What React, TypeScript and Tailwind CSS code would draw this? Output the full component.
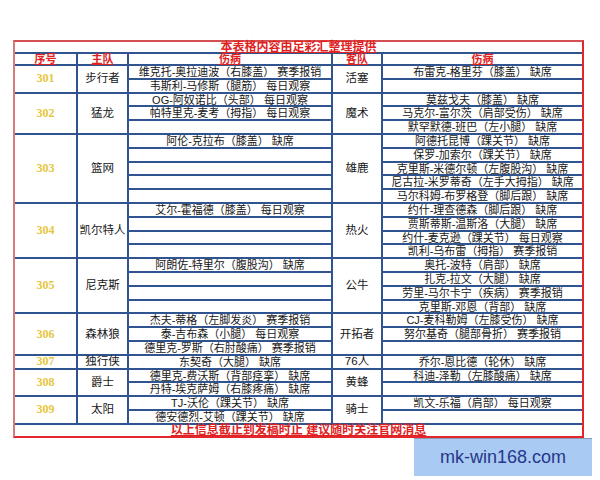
const rows = [
  {
    no: "301",
    home: "步行者",
    homeInj: ["维克托-奥拉迪波（右膝盖） 赛季报销", "韦斯利-马修斯（腿筋） 每日观察"],
    away: "活塞",
    awayInj: ["布雷克-格里芬（膝盖） 缺席", ""],
  },
  {
    no: "302",
    home: "猛龙",
    homeInj: ["OG-阿奴诺比（头部） 每日观察", "帕特里克-麦考（拇指） 每日观察", ""],
    away: "魔术",
    awayInj: ["莫兹戈夫（膝盖） 缺席", "马克尔-富尔茨（肩部受伤） 缺席", "默罕默德-班巴（左小腿） 缺席"],
  },
  {
    no: "303",
    home: "篮网",
    homeInj: ["阿伦-克拉布（膝盖） 缺席", "", "", "", ""],
    away: "雄鹿",
    awayInj: [
      "阿德托昆博（踝关节） 缺席",
      "保罗-加索尔（踝关节） 缺席",
      "克里斯-米德尔顿（左腹股沟） 缺席",
      "尼古拉-米罗蒂奇（左手大拇指） 缺席",
      "马尔科姆-布罗格登（脚后跟） 缺席",
    ],
  },
  {
    no: "304",
    home: "凯尔特人",
    homeInj: ["艾尔-霍福德（膝盖） 每日观察", "", "", ""],
    away: "热火",
    awayInj: [
      "约什-理查德森（脚后跟） 缺席",
      "贾斯蒂斯-温斯洛（大腿） 缺席",
      "约什-麦克逊（踝关节） 每日观察",
      "凯利-乌布雷（拇指） 赛季报销",
    ],
  },
  {
    no: "305",
    home: "尼克斯",
    homeInj: ["阿朗佐-特里尔（腹股沟） 缺席", "", "", ""],
    away: "公牛",
    awayInj: [
      "奥托-波特（肩部） 缺席",
      "扎克-拉文（大腿） 缺席",
      "劳里-马尔卡宁（疾病） 赛季报销",
      "克里斯-邓恩（背部） 缺席",
    ],
  },
  {
    no: "306",
    home: "森林狼",
    homeInj: ["杰夫-蒂格（左脚发炎） 赛季报销", "泰-吉布森（小腿） 每日观察", "德里克-罗斯（右肘酸痛） 赛季报销"],
    away: "开拓者",
    awayInj: ["CJ-麦科勒姆（左膝受伤） 缺席", "努尔基奇（腿部骨折） 赛季报销", ""],
  },
  {
    no: "307",
    home: "独行侠",
    homeInj: ["东契奇（大腿） 缺席"],
    away: "76人",
    awayInj: ["乔尔-恩比德（轮休） 缺席"],
  },
  {
    no: "308",
    home: "爵士",
    homeInj: ["德里克-费沃斯（背部痉挛） 缺席", "丹特-埃克萨姆（右膝疼痛） 缺席"],
    away: "黄蜂",
    awayInj: ["科迪-泽勒（左膝酸痛） 缺席", ""],
  },
  {
    no: "309",
    home: "太阳",
    homeInj: ["TJ-沃伦（踝关节） 缺席", "德安德烈-艾顿（踝关节） 缺席"],
    away: "骑士",
    awayInj: ["凯文-乐福（肩部） 每日观察", ""],
  },
];

const InjuryColumn = ({ items, className }: { items: string[]; className: string }) => (
  <div className={`flex flex-col gap-[2px] ${className}`}>
    {items.map((t, i) => (
      <div
        key={i}
        className="h-[11.8px] bg-white text-center text-[11px] leading-[12px] whitespace-nowrap text-[#161616]"
      >
        {t}
      </div>
    ))}
  </div>
);

export default function App() {
  return (
    <div className="relative w-[600px] h-[480px] bg-white overflow-hidden font-['Liberation_Sans','Noto_Sans_CJK_SC',sans-serif]">
      <div className="mt-[40px] ml-[13px] w-[571px] border-2 border-l-[#d67a7a] border-t-[#d45050] border-r-[#e2262c] border-b-[#e2262c]">
        {/* title */}
        <div className="h-[10px] text-center text-[12px] leading-[10px] font-bold text-[#e0221e] underline">
          本表格内容由足彩汇整理提供
        </div>

        <div className="flex flex-col gap-[2px] py-[2px] bg-[#2f5490]">
          {/* header */}
          <div className="flex gap-[2px] h-[10px] text-[11px] leading-[10px] font-bold text-[#e0221e] text-center">
            <div className="w-[61px] bg-white underline">序号</div>
            <div className="w-[49px] bg-white underline">主队</div>
            <div className="w-[202px] bg-white underline">伤病</div>
            <div className="w-[48px] bg-white underline">客队</div>
            <div className="flex-1 bg-white underline">伤病</div>
          </div>

          {rows.map((r) => (
            <div key={r.no} className="flex gap-[2px]">
              <div className="w-[61px] bg-white flex items-center justify-center font-['Liberation_Serif',serif] font-bold text-[12px] leading-[11px] text-[#e6c63c]">
                {r.no}
              </div>
              <div className="w-[49px] bg-white flex items-center justify-center text-[11.5px] leading-[11px] text-[#161616] whitespace-nowrap">
                {r.home}
              </div>
              <InjuryColumn items={r.homeInj} className="w-[202px]" />
              <div className="w-[48px] bg-white flex items-center justify-center text-[11.5px] leading-[11px] text-[#161616] whitespace-nowrap">
                {r.away}
              </div>
              <InjuryColumn items={r.awayInj} className="flex-1" />
            </div>
          ))}
        </div>

        {/* footer */}
        <div className="h-[11px] text-center text-[12px] leading-[11px] font-bold text-[#e0221e] underline">
          以上信息截止到发稿时止 建议随时关注官网消息
        </div>
      </div>

      {/* watermark */}
      <div className="absolute left-[414px] top-[438px] w-[178px] h-[38px] bg-[#a9caf2] border-t border-[#8d9cb6] flex items-center pl-[26px] text-[18px] text-[#27378a]">
        mk-win168.com
      </div>
    </div>
  );
}
